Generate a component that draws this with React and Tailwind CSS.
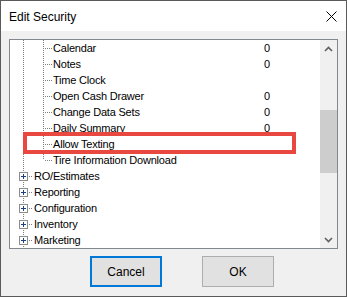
import React from "react";

const items = [
  { label: "Calendar", value: "0", level: 3 },
  { label: "Notes", value: "0", level: 3 },
  { label: "Time Clock", level: 3 },
  { label: "Open Cash Drawer", value: "0", level: 3 },
  { label: "Change Data Sets", value: "0", level: 3 },
  { label: "Daily Summary", value: "0", level: 3 },
  { label: "Allow Texting", level: 3 },
  { label: "Tire Information Download", level: 3, last: true },
  { label: "RO/Estimates", level: 2 },
  { label: "Reporting", level: 2 },
  { label: "Configuration", level: 2 },
  { label: "Inventory", level: 2 },
  { label: "Marketing", level: 2 },
];

const dot = "#808080";

// dotted tree guides for a child row
function ChildLines({ last }) {
  return (
    <svg width="42" height="16" className="shrink-0">
      <line x1="13.5" y1="0" x2="13.5" y2="16" stroke={dot} strokeDasharray="1 1" />
      <line x1="33.5" y1="0" x2="33.5" y2={last ? 8 : 16} stroke={dot} strokeDasharray="1 1" />
      <line x1="35" y1="8.5" x2="42" y2="8.5" stroke={dot} strokeDasharray="1 1" />
    </svg>
  );
}

// plus box with guides for a collapsed node
function NodeLines() {
  return (
    <svg width="23" height="16" className="shrink-0">
      <line x1="13.5" y1="0" x2="13.5" y2="16" stroke={dot} strokeDasharray="1 1" />
      <rect x="9.5" y="4.5" width="8" height="8" fill="#fff" stroke="#8c8c8c" />
      <line x1="11" y1="8.5" x2="16" y2="8.5" stroke="#1f3f8f" />
      <line x1="13.5" y1="6" x2="13.5" y2="11" stroke="#1f3f8f" />
      <line x1="19" y1="8.5" x2="22" y2="8.5" stroke={dot} strokeDasharray="1 1" />
    </svg>
  );
}

export default function App() {
  return (
    <div
      className="w-[347px] h-[297px] border border-[#5a5a5a] bg-[#f0f0f0] flex flex-col text-black overflow-hidden"
      style={{ fontFamily: '"Liberation Sans", Arial, sans-serif' }}
    >
      {/* title bar */}
      <div className="h-[30px] bg-white flex items-center justify-between pl-[8px] pr-[9px] shrink-0">
        <span className="text-[12px] pt-[1px]">Edit Security</span>
        <svg width="11" height="11" viewBox="0 0 11 11">
          <path d="M0.5 0.5 L10.5 10.5 M10.5 0.5 L0.5 10.5" stroke="#000" strokeWidth="1" />
        </svg>
      </div>

      {/* tree */}
      <div className="mt-[8px] ml-[8px] w-[329px] h-[210px] border border-[#828790] bg-white flex relative shrink-0">
        <div className="flex-1 overflow-hidden">
          {items.map((it) => (
            <div key={it.label} className="h-[16px] flex items-center text-[11px] tracking-[-0.2px] leading-none">
              {it.level === 3 ? <ChildLines last={it.last} /> : <NodeLines />}
              <span className={`${it.level === 3 ? "w-[212px]" : "w-[231px]"} pl-[1px] whitespace-nowrap`}>{it.label}</span>
              {it.value && <span>{it.value}</span>}
            </div>
          ))}
        </div>

        {/* scrollbar */}
        <div className="w-[17px] bg-[#f0f0f0] flex flex-col shrink-0">
          <div className="h-[17px] flex items-center justify-center">
            <svg width="9" height="6" viewBox="0 0 9 6">
              <path d="M1 5 L4.5 1.5 L8 5" stroke="#606060" strokeWidth="1.6" fill="none" />
            </svg>
          </div>
          <div className="h-[53px]" />
          <div className="h-[63px] bg-[#cdcdcd]" />
          <div className="flex-1" />
          <div className="h-[17px] flex items-center justify-center">
            <svg width="9" height="6" viewBox="0 0 9 6">
              <path d="M1 1 L4.5 4.5 L8 1" stroke="#606060" strokeWidth="1.6" fill="none" />
            </svg>
          </div>
        </div>

        {/* highlight */}
        <div className="absolute left-[13px] top-[92px] w-[273px] h-[22px] border-[4px] border-[#e8483f]" />
      </div>

      {/* buttons */}
      <div className="flex gap-[40px] pl-[89px] mt-[7px]">
        <button className="w-[72px] h-[31px] bg-[#e1e1e1] border-2 border-[#0078d7] text-[12px]">Cancel</button>
        <button className="w-[72px] h-[31px] bg-[#e1e1e1] border border-[#adadad] text-[12px]">OK</button>
      </div>
    </div>
  );
}
